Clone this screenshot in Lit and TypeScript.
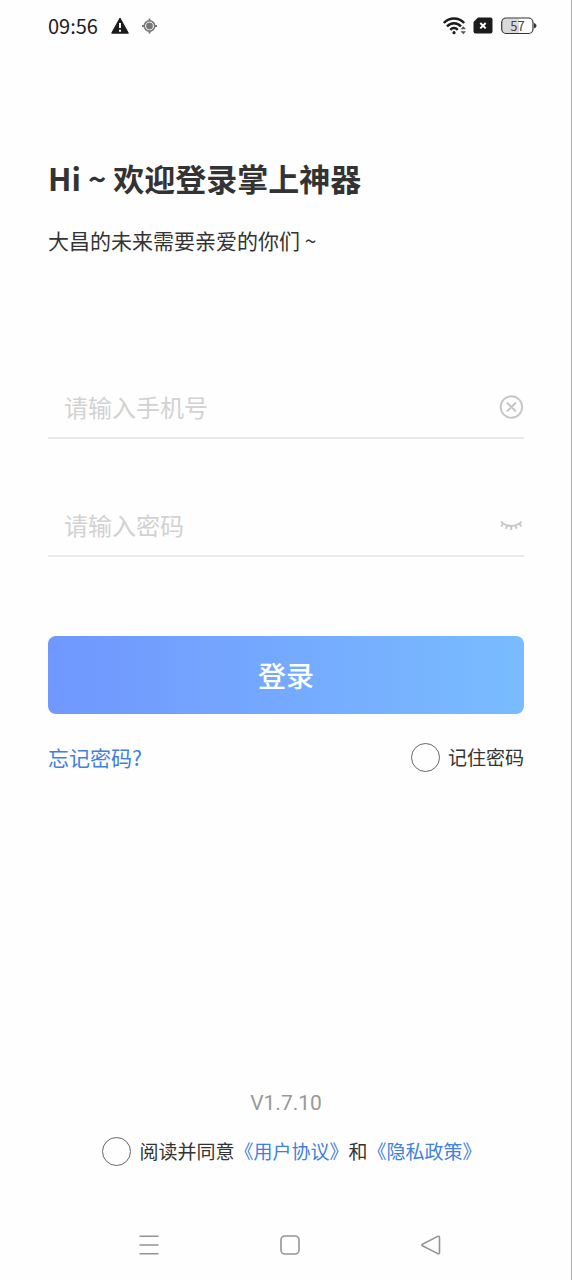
import { LitElement, html, css } from "lit";
import { customElement, state } from "lit/decorators.js";

@customElement("status-bar")
class StatusBar extends LitElement {
  static styles = css`
    :host {
      display: flex;
      align-items: center;
      justify-content: space-between;
      height: 52px;
      padding: 0 34px 0 48px;
      font-size: 20px;
      line-height: 28px;
      color: #1c1c1c;
    }
    .group {
      display: flex;
      align-items: center;
    }
    .left {
      gap: 11px;
    }
    .right {
      gap: 6px;
    }
    svg {
      display: block;
    }
    .level {
      font-family: "Noto Sans CJK SC", sans-serif;
      font-size: 13px;
    }
  `;

  render() {
    return html`
      <div class="group left">
        <span>09:56</span>
        <svg width="22" height="20" viewBox="0 0 22 20" aria-hidden="true">
          <path d="M11 2.5 19 17H3Z" fill="#1c1c1c" stroke="#1c1c1c" stroke-width="1.5" stroke-linejoin="round" />
          <path d="M11 7v5M11 13.8v2" stroke="#fff" stroke-width="2" />
        </svg>
        <svg width="16" height="20" viewBox="0 0 16 20" aria-hidden="true">
          <circle cx="7.5" cy="10" r="5.2" fill="none" stroke="#777" stroke-width="1.6" />
          <circle cx="7.5" cy="10" r="3.4" fill="#777" />
          <path d="M7.5 2.5v3M7.5 14.5v3M0 10h3M12 10h3" stroke="#777" stroke-width="1.8" />
        </svg>
      </div>
      <div class="group right">
        <svg width="25" height="20" viewBox="0 0 25 20" fill="none" aria-hidden="true">
          <g stroke="#1c1c1c" stroke-width="2.5">
            <path d="M1.8 7C7.5 1 16.5 1 22.2 7" />
            <path d="M5 10.5C9 6.2 15 6.2 19 10.5" />
            <path d="M8.3 13.8C10.5 11.4 13.5 11.4 15.7 13.8" />
          </g>
          <circle cx="12" cy="16.7" r="1.6" fill="#1c1c1c" />
          <path d="M18.5 13.3 21.3 10.3 24 13.3ZM18.5 15.3h5.5L21.3 18.3Z" fill="#555" />
        </svg>
        <svg width="20" height="20" viewBox="0 0 20 20" aria-hidden="true">
          <path d="M5 1.5H17.5Q19.5 1.5 19.5 3.5V15.5Q19.5 17.5 17.5 17.5H2.5Q.5 17.5 .5 15.5V6Z" fill="#1c1c1c" />
          <path d="M7.3 7l5.4 5.4M12.7 7l-5.4 5.4" stroke="#fff" stroke-width="2" />
        </svg>
        <svg width="38" height="20" viewBox="0 0 38 20" role="img" aria-label="57%">
          <path d="M6 2.5H20V17H6Q3 17 3 14V5.5Q3 2.5 6 2.5Z" fill="#dadada" />
          <rect x="2.7" y="2" width="31.3" height="15.5" rx="4.5" fill="none" stroke="#333" stroke-width="1.2" />
          <path d="M35.5 7.5q1.5 .5 1.5 2.2t-1.5 2.2Z" fill="#333" stroke="#333" />
          <text class="level" x="18.5" y="14.5" text-anchor="middle" fill="#444">57</text>
        </svg>
      </div>
    `;
  }
}

@customElement("nav-bar")
class NavBar extends LitElement {
  static styles = css`
    :host {
      display: grid;
      grid-template-columns: repeat(3, 1fr);
      height: 70px;
      padding: 0 70px 0 78px;
    }
    button {
      display: grid;
      place-items: center;
      border: 0;
      padding: 0;
      background: none;
    }
    svg {
      display: block;
      fill: none;
      stroke: #949494;
      stroke-width: 1.6;
      stroke-linejoin: round;
    }
  `;

  render() {
    return html`
      <button aria-label="最近任务">
        <svg width="22" height="22" viewBox="0 0 22 22"><path d="M1.5 2.2h19M1.5 11h19M1.5 19.7h19" /></svg>
      </button>
      <button aria-label="主页">
        <svg width="22" height="22" viewBox="0 0 22 22"><rect x="2" y="2" width="18" height="18" rx="4" /></svg>
      </button>
      <button aria-label="返回">
        <svg width="22" height="22" viewBox="0 0 22 22">
          <path d="M2.4 10.2 17.8 2.4Q19.5 1.8 19.5 3.5V18.5Q19.5 20.2 17.8 19.6L2.4 11.8Q1.2 11 2.4 10.2Z" />
        </svg>
      </button>
    `;
  }
}

@customElement("app-root")
class AppRoot extends LitElement {
  static styles = css`
    :host {
      display: flex;
      flex-direction: column;
      box-sizing: border-box;
      min-height: 100vh;
      border-right: 1px solid #b0b0b0;
      background: #fefefe;
      color: #333;
      font-family: "Noto Sans CJK SC", sans-serif;
    }
    main {
      flex: 1;
      display: flex;
      flex-direction: column;
      padding: 106px 47px 44px 48px;
    }
    h1 {
      margin: 0;
      font-size: 31px;
      line-height: 40px;
      font-weight: 700;
    }
    .subtitle {
      margin: 28px 0 0;
      font-size: 21px;
      line-height: 28px;
    }
    form {
      display: flex;
      flex-direction: column;
      margin-top: 124px;
    }
    .field {
      display: flex;
      align-items: center;
      box-sizing: border-box;
      height: 61px;
      padding-bottom: 2px;
      border-bottom: 2px solid #e9e9e9;
    }
    .field + .field {
      margin-top: 57px;
    }
    .field input {
      flex: 1;
      min-width: 0;
      border: 0;
      outline: 0;
      padding: 0 16px;
      background: none;
      color: #333;
      font: inherit;
      font-size: 24px;
      line-height: 36px;
    }
    .field input::placeholder {
      color: #d2d2d2;
      opacity: 1;
    }
    .icon {
      border: 0;
      padding: 0;
      background: none;
    }
    .icon svg {
      display: block;
      fill: none;
      stroke: #c6c6c6;
    }
    .login {
      height: 78px;
      margin-top: 79px;
      border: 0;
      border-radius: 8px;
      background: linear-gradient(90deg, #7097fe, #79bcff);
      color: #fff;
      font: inherit;
      font-size: 28px;
      font-weight: 500;
    }
    .options {
      display: flex;
      align-items: center;
      justify-content: space-between;
      margin-top: 28px;
      line-height: 30px;
    }
    a {
      color: #4080e0;
      text-decoration: none;
    }
    .forgot {
      font-size: 21px;
    }
    .check {
      display: flex;
      align-items: center;
      gap: 8px;
      font-size: 19px;
      line-height: 30px;
    }
    .check input {
      appearance: none;
      flex: none;
      width: 29px;
      height: 29px;
      margin: 0;
      border: 1px solid #666;
      border-radius: 50%;
    }
    .check input:checked {
      border-color: #4080e0;
      background: #4080e0;
    }
    footer {
      display: flex;
      flex-direction: column;
      gap: 19px;
      margin-top: auto;
    }
    .version {
      margin: 0;
      color: #999;
      font-family: Roboto, sans-serif;
      font-size: 21px;
      line-height: 28px;
      text-align: center;
    }
    .agree {
      justify-content: center;
      padding-left: 12px;
    }
  `;

  @state() private phone = "";
  @state() private showPassword = false;

  render() {
    return html`
      <status-bar></status-bar>
      <main>
        <h1>Hi ~ 欢迎登录掌上神器</h1>
        <p class="subtitle">大昌的未来需要亲爱的你们 ~</p>
        <form @submit=${(e: Event) => e.preventDefault()}>
          <div class="field">
            <input
              type="tel"
              aria-label="手机号"
              placeholder="请输入手机号"
              .value=${this.phone}
              @input=${(e: InputEvent) => (this.phone = (e.target as HTMLInputElement).value)}
            />
            <button class="icon" type="button" aria-label="清除" @click=${() => (this.phone = "")}>
              <svg width="26" height="26" viewBox="0 0 26 26">
                <circle cx="13.4" cy="13" r="10.7" stroke-width="1.9" />
                <path d="M8.9 8.5l9 9M17.9 8.5l-9 9" stroke-width="2" />
              </svg>
            </button>
          </div>
          <div class="field">
            <input
              type=${this.showPassword ? "text" : "password"}
              aria-label="密码"
              placeholder="请输入密码"
            />
            <button
              class="icon"
              type="button"
              aria-label="显示密码"
              @click=${() => (this.showPassword = !this.showPassword)}
            >
              <svg width="26" height="26" viewBox="0 0 26 26">
                <path
                  d="M3 9.5C8 15.3 18.5 15.3 23.5 9.5M5.2 11.2 3.3 14.5M9.2 13.3 8 16.8M13.3 14V18M17.3 13.3 18.5 16.8M21.3 11.2 23.2 14.5"
                  stroke-width="1.9"
                />
              </svg>
            </button>
          </div>
          <button class="login" type="submit">登录</button>
          <div class="options">
            <a class="forgot" href="#forgot">忘记密码?</a>
            <label class="check"><input type="checkbox" />记住密码</label>
          </div>
        </form>
        <footer>
          <p class="version">V1.7.10</p>
          <div class="check agree">
            <input id="agree" type="checkbox" />
            <span
              ><label for="agree">阅读并同意</label><a href="#terms">《用户协议》</a>和<a href="#privacy">《隐私政策》</a></span
            >
          </div>
        </footer>
      </main>
      <nav-bar></nav-bar>
    `;
  }
}
